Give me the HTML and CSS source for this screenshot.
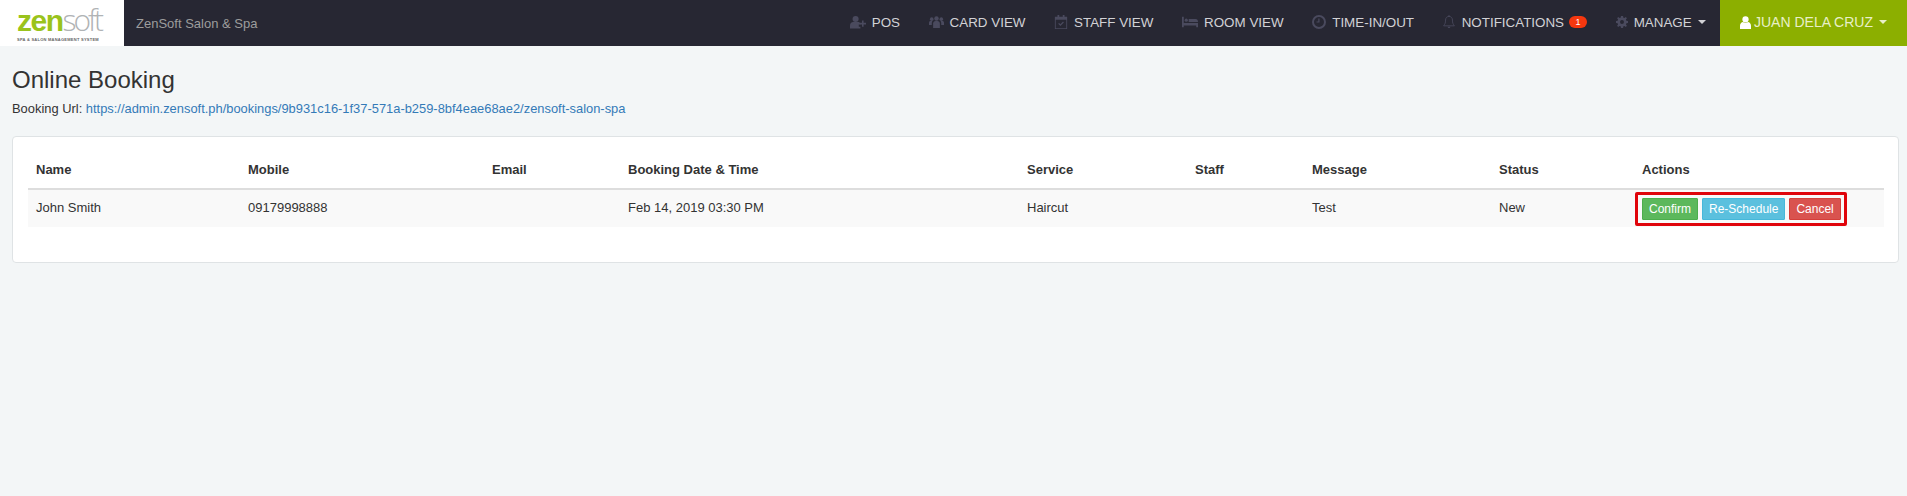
FILE: index.html
```html
<!DOCTYPE html>
<html lang="en">
<head>
  <meta charset="UTF-8" />
  <title>Online Booking</title>
  <link rel="stylesheet" href="styles.css">
</head>
<body>
  <nav class="navbar">
    <a class="brand">
      <span class="logo"><span class="logo-word"><b>zen</b><span class="logo-thin">soft</span></span><span class="logo-tag">SPA &amp; SALON MANAGEMENT SYSTEM</span></span>
    </a>
    <span class="shop-name">ZenSoft Salon &amp; Spa</span>
    <ul class="menu">
      <li>
        <svg class="icon icon-wide" viewBox="0 0 20 16"><circle cx="7" cy="4.2" r="3.8"/><path d="M0 16v-3.5C0 9.800 1.800 8 4 8h6c1.600 0 2.600.8 3 2v1h-2v3h2v2z"/><path d="M15 6h2v3h3v2h-3v3h-2v-3h-3V9h3z"/></svg>POS
      </li>
      <li>
        <svg class="icon icon-group" viewBox="0 0 20 16"><circle cx="10" cy="3.200" r="3"/><circle cx="3.600" cy="4.200" r="2.400"/><circle cx="16.400" cy="4.200" r="2.400"/><path d="M5.500 16V10c0-2 1.500-3.200 3-3.200h3c1.500 0 3 1.200 3 3.200v6z"/><path d="M0 12V9c0-1.300 1-2.200 2-2.200h2.500c-.5.800-.8 1.700-.8 2.800V12zM20 12V9c0-1.300-1-2.200-2-2.200h-2.500c.5.800.8 1.700.8 2.800V12z"/></svg>CARD VIEW
      </li>
      <li>
        <svg class="icon" viewBox="0 0 14 16"><path fill-rule="evenodd" d="M0 2h3V0h2v2h4V0h2v2h3v14H0zM1 5.500V15h12V5.500z"/><path d="M3.800 10l1-1 1.500 1.500L9.300 7.500l1 1-4 4z"/></svg>STAFF VIEW
      </li>
      <li>
        <svg class="icon icon-wide" viewBox="0 0 18 14"><path d="M0 1h2v7h16v5h-2v-2H2v2H0z"/><circle cx="4.800" cy="5" r="1.800"/><path d="M7.500 3.500h8c1.400 0 2.500 1 2.500 3.500H7.500z"/></svg>ROOM VIEW
      </li>
      <li>
        <svg class="icon" viewBox="0 0 14 14"><path fill-rule="evenodd" d="M7 0a7 7 0 1 0 0 14A7 7 0 0 0 7 0zm0 2a5 5 0 1 1 0 10A5 5 0 0 1 7 2z"/><path d="M6.300 3.500h1.200v4H4.500V6.400h1.800z"/></svg>TIME-IN/OUT
      </li>
      <li>
        <svg class="icon icon-bell" viewBox="0 0 14 16"><path class="outline" d="M7 1.500c-2.600 0-4 1.900-4 4.200 0 3.300-.8 5-2.300 6.800h12.600C11.800 10.700 11 9 11 5.700c0-2.300-1.400-4.200-4-4.200z"/><path d="M5.400 13.500h3.200a1.600 1.600 0 0 1-3.200 0zM6.300 0h1.400v2H6.300z"/></svg>NOTIFICATIONS<span class="badge">1</span>
      </li>
      <li>
        <svg class="icon icon-cog" viewBox="0 0 14 14"><path fill-rule="evenodd" d="M5.800 0h2.400l.4 1.900 1.200.5L11.500 1.300l1.200 1.200-1.100 1.700.5 1.200 1.900.4v2.400l-1.900.4-.5 1.200 1.100 1.700-1.200 1.200-1.700-1.100-1.200.5-.4 1.900H5.800l-.4-1.900-1.200-.5-1.700 1.100-1.200-1.200 1.100-1.700-.5-1.200L0 8.200V5.800l1.900-.4.500-1.200L1.300 2.500l1.200-1.200 1.700 1.100 1.200-.5zM7 4.700a2.300 2.300 0 1 0 0 4.600 2.300 2.300 0 0 0 0-4.600z"/></svg>MANAGE<span class="caret"></span>
      </li>
    </ul>
    <div class="user-menu">
      <svg class="icon icon-user" viewBox="0 0 12 14"><circle cx="6" cy="3.600" r="3.400"/><path d="M0 14v-3.500C0 8.500 1.500 6.500 3.300 6.500c.7.600 1.600 1 2.700 1s2-.4 2.700-1C10.500 6.500 12 8.500 12 10.500V14z"/></svg>JUAN DELA CRUZ<span class="caret"></span>
    </div>
  </nav>

  <div class="content">
    <h1>Online Booking</h1>
    <p class="booking-url">Booking Url: <a>https://admin.zensoft.ph/bookings/9b931c16-1f37-571a-b259-8bf4eae68ae2/zensoft-salon-spa</a></p>

    <div class="panel">
      <table class="bookings">
        <thead>
          <tr>
            <th class="col-name">Name</th>
            <th class="col-mobile">Mobile</th>
            <th class="col-email">Email</th>
            <th class="col-date">Booking Date &amp; Time</th>
            <th class="col-service">Service</th>
            <th class="col-staff">Staff</th>
            <th class="col-message">Message</th>
            <th class="col-status">Status</th>
            <th>Actions</th>
          </tr>
        </thead>
        <tbody>
          <tr>
            <td>John Smith</td>
            <td>09179998888</td>
            <td></td>
            <td>Feb 14, 2019 03:30 PM</td>
            <td>Haircut</td>
            <td></td>
            <td>Test</td>
            <td>New</td>
            <td class="actions-cell">
              <div class="actions">
                <button class="btn btn-success">Confirm</button>
                <button class="btn btn-info">Re-Schedule</button>
                <button class="btn btn-danger">Cancel</button>
              </div>
            </td>
          </tr>
        </tbody>
      </table>
    </div>
  </div>
</body>
</html>
```

FILE: styles.css
```css
body {
  font-family: "Liberation Sans", Arial, sans-serif;
  font-size: 13px;
  color: #333;
  background: #f3f6f7;
  margin: 0;
}

.navbar {
  display: flex;
  align-items: center;
  height: 46px;
  background: #272733;
}

.brand {
  display: flex;
  align-items: flex-start;
  width: 124px;
  height: 46px;
  padding: 5px 0 0 17px;
  box-sizing: border-box;
  background: #fff;
}

.logo {
  display: flex;
  flex-direction: column;
  align-items: flex-start;
}

.logo-word {
  font-size: 30px;
  line-height: 30px;
  letter-spacing: -1.5px;
  color: #9ac31c;
}

.logo-thin {
  font-family: "Open Sans", sans-serif;
  font-weight: 300;
  letter-spacing: -3px;
  color: #b0b3b5;
}

.logo-tag {
  margin-top: 2px;
  font-size: 4px;
  line-height: 4px;
  font-weight: 700;
  letter-spacing: 0.25px;
  color: #666;
  white-space: nowrap;
}

.shop-name {
  margin-left: 12px;
  font-size: 13px;
  color: #9d9d9d;
}

.menu {
  display: flex;
  align-items: center;
  list-style: none;
  margin: 0 0 0 auto;
  padding: 0 0 2px;
  color: #d2d2d6;
  font-size: 13.4px;
}

.menu li {
  display: flex;
  align-items: center;
  padding: 0 14.3px;
  white-space: nowrap;
}

.icon {
  width: 14px;
  height: 14px;
  margin-right: 6px;
  fill: #4a4a5e;
}

.icon-wide {
  width: 16px;
}

.icon-group {
  width: 15px;
}

.icon-bell {
  width: 12px;
  margin-right: 7px;
}

.icon-bell .outline {
  fill: none;
  stroke: #4a4a5e;
  stroke-width: 1;
}

.icon-cog {
  width: 12px;
}

.badge {
  margin-left: 5px;
  width: 18px;
  height: 12px;
  line-height: 12px;
  text-align: center;
  font-size: 9px;
  border-radius: 7px;
  color: #fff;
  background: #f5370f;
}

.caret {
  width: 0;
  height: 0;
  margin-left: 6px;
  border-top: 4px solid;
  border-left: 4px solid transparent;
  border-right: 4px solid transparent;
}

.user-menu {
  display: flex;
  align-items: center;
  justify-content: center;
  width: 187px;
  height: 46px;
  padding-bottom: 2px;
  box-sizing: border-box;
  font-size: 14px;
  color: #e8efc8;
  background: #8caf00;
}

.icon-user {
  width: 11px;
  height: 13px;
  margin-right: 3px;
  fill: #fff;
}

.content {
  padding: 0 8px 0 12px;
}

h1 {
  margin: 20px 0 0;
  font-size: 24px;
  line-height: 28px;
  font-weight: 400;
}

.booking-url {
  margin: 6px 0 0;
  line-height: 18px;
  font-size: 12.9px;
}

.booking-url a {
  color: #337ab7;
}

.panel {
  margin-top: 18px;
  height: 127px;
  padding: 16px 14px 0 15px;
  box-sizing: border-box;
  background: #fff;
  border: 1px solid #dfe3e5;
  border-radius: 4px;
}

.bookings {
  width: 100%;
  table-layout: fixed;
  border-collapse: collapse;
}

.bookings th,
.bookings td {
  box-sizing: border-box;
  padding: 0 8px 2px;
}

.bookings th {
  height: 36px;
  text-align: left;
  font-size: 13px;
  border-bottom: 2px solid #ddd;
}

.bookings td {
  height: 38px;
  background: #f9f9f9;
}

.bookings .actions-cell {
  padding-bottom: 0;
}

.col-name { width: 212px; }
.col-mobile { width: 244px; }
.col-email { width: 136px; }
.col-date { width: 399px; }
.col-service { width: 168px; }
.col-staff { width: 117px; }
.col-message { width: 187px; }
.col-status { width: 143px; }

.actions {
  position: relative;
  display: flex;
  gap: 4px;
}

.actions::after {
  content: "";
  position: absolute;
  top: -6px;
  left: -7px;
  width: 212px;
  height: 34px;
  box-sizing: border-box;
  border: 3.5px solid #e0040b;
  border-radius: 2px;
}

.btn {
  height: 22px;
  padding: 0 6px;
  font-family: inherit;
  font-size: 12px;
  white-space: nowrap;
  color: #fff;
  border: 1px solid;
  border-radius: 1px;
}

.btn-success {
  background: #5cb85c;
  border-color: #4cae4c;
}

.btn-info {
  background: #5bc0de;
  border-color: #46b8da;
}

.btn-danger {
  background: #d9534f;
  border-color: #d43f3a;
}
```
